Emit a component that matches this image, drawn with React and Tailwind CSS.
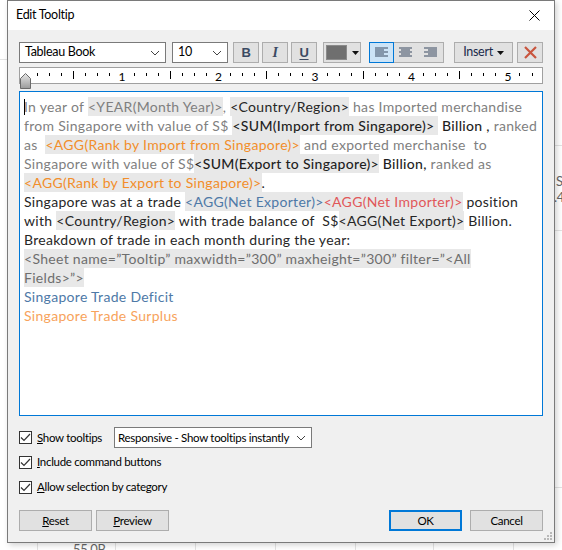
import React from 'react';

const TONE = {
  g:  'text-[#7f7f7f]',
  d:  'text-[#262626]',
  db: 'text-[#1f1f1f] font-medium',
  o:  'text-[#f28e2b]',
  lo: 'text-[#f7a35c]',
  b:  'text-[#4e79a7]',
  r:  'text-[#e15759]',
  f:  'text-[#6e6e6e]',
};

const LINES = [
  [['In year of ', 'g'], ['<YEAR(Month Year)>', 'g', 1], [', ', 'g'], ['<Country/Region>', 'd', 1], [' has Imported merchandise', 'g']],
  [['from Singapore with value of S$ ', 'g'], ['<SUM(Import from Singapore)> ', 'db', 1], [' Billion ,', 'db'], [' ranked', 'g']],
  [['as  ', 'g'], ['<AGG(Rank by Import from Singapore)>', 'o', 1], [' and exported merchanise  to', 'g']],
  [['Singapore with value of S$', 'g'], ['<SUM(Export to Singapore)>', 'db', 1], [' Billion,', 'db'], [' ranked as', 'g']],
  [['<AGG(Rank by Export to Singapore)>', 'o', 1], ['.', 'd']],
  [['Singapore was at a trade ', 'd'], ['<AGG(Net Exporter)>', 'b', 1], ['<AGG(Net Importer)>', 'r', 1], [' position', 'd']],
  [['with ', 'd'], ['<Country/Region>', 'd', 1], [' with trade balance of  S$', 'd'], ['<AGG(Net Export)>', 'd', 1], [' Billion.', 'd']],
  [['Breakdown of trade in each month during the year:', 'd']],
  [['<Sheet name=\u201dTooltip\u201d maxwidth=\u201d300\u201d maxheight=\u201d300\u201d filter=\u201d<All', 'f', 1]],
  [['Fields>\u201d>', 'f', 1]],
  [['Singapore Trade Deficit', 'b']],
  [['Singapore Trade Surplus', 'lo']],
];

function Chevron() {
  return (
    <svg width="10" height="6" viewBox="0 0 10 6">
      <path d="M1 1 L5 5 L9 1" fill="none" stroke="#444" strokeWidth="1" />
    </svg>
  );
}

function AlignIcon({ mode }) {
  const rows = [0, 1, 2, 3, 4];
  return (
    <svg width="13" height="11" viewBox="0 0 13 11">
      {rows.map(i => {
        const w = i % 2 === 0 ? 13 : 9;
        const x = mode === 'left' ? 0 : mode === 'right' ? 13 - w : (13 - w) / 2;
        return <rect key={i} x={x} y={i * 2 + 0.5} width={w} height="1" fill="#3b4a63" />;
      })}
    </svg>
  );
}

function Check() {
  return (
    <span className="w-[13px] h-[13px] bg-white border border-[#333] flex items-center justify-center">
      <svg width="11" height="9" viewBox="0 0 11 9">
        <path d="M1 4.5 L4 7.5 L10 1" fill="none" stroke="#333" strokeWidth="1.2" />
      </svg>
    </span>
  );
}

function Ruler() {
  const ticks = [];
  for (let k = 1; k < 44; k++) {
    const x = 5 + k * 12.06;
    if (k % 8 === 0) continue;
    const long = k % 8 === 4;
    ticks.push(<rect key={k} x={Math.round(x)} y={long ? 3 : 5} width="1" height={long ? 8 : 3} fill="#000" />);
  }
  return (
    <div className="relative h-[17px] w-[524px] bg-white border border-[#a0a0a0]">
      <svg className="absolute left-0 top-0" width="522" height="15">{ticks}</svg>
      {[1, 2, 3, 4, 5].map(n => (
        <span key={n} className="absolute top-[1px] text-[12px] leading-[15px] text-black"
          style={{ left: 5 + n * 96.5 - 3 }}>{n}</span>
      ))}
      <svg className="absolute left-[0px] top-[5px]" width="11" height="16" viewBox="0 0 11 16">
        <defs>
          <linearGradient id="rm" x1="0" y1="0" x2="0" y2="1">
            <stop offset="0" stopColor="#e8e8e8" />
            <stop offset="1" stopColor="#9a9a9a" />
          </linearGradient>
        </defs>
        <path d="M5.5 0.5 L10.5 5.5 L10.5 15.5 L0.5 15.5 L0.5 5.5 Z" fill="url(#rm)" stroke="#6a6a6a" />
      </svg>
    </div>
  );
}

function Btn({ children, className = '' }) {
  return (
    <div className={`h-[21px] flex items-center justify-center bg-[#e1e1e1] border border-[#adadad] ${className}`}>
      {children}
    </div>
  );
}

export default function App() {
  return (
    <div className="relative w-[562px] h-[550px] bg-white overflow-hidden font-['Lato',sans-serif] text-[11.5px] tracking-[-0.3px] text-black">
      {/* canvas behind the dialog */}
      <div className="absolute left-0 top-[59px] w-[8px] h-px bg-[#e3e3e3]" />
      <div className="absolute left-[553px] top-[145px] w-[10px] h-px bg-[#e3e3e3]" />
      <div className="absolute left-[553px] top-[230px] w-[10px] h-px bg-[#e3e3e3]" />
      <div className="absolute left-[553px] top-[487px] w-[10px] h-px bg-[#e3e3e3]" />
      <span className="absolute left-[556px] top-[173px] text-[13px] leading-[16px] text-[#666]">S</span>
      <span className="absolute left-[554px] top-[189px] text-[13px] leading-[16px] text-[#666]">.4</span>
      {[37, 115, 195, 275, 355, 433, 513].map(x => (
        <div key={x} className="absolute top-[540px] h-[10px] w-px bg-[#e3e3e3]" style={{ left: x }} />
      ))}
      <span className="absolute left-[73px] top-[541px] text-[13px] leading-[16px] text-[#666]">55.0B</span>

      {/* dialog */}
      <div className="absolute left-[7px] top-0 w-[548px] h-[543px] border border-[#7a7a7a] bg-[#f0f0f0] shadow-[2px_2px_6px_rgba(0,0,0,0.18)] flex flex-col">
        <div className="h-[29px] bg-white flex items-center pl-[8px] pr-[8px]">
          <span className="text-[12.5px]">Edit Tooltip</span>
          <svg className="ml-auto mr-[6px]" width="11" height="11" viewBox="0 0 11 11">
            <path d="M0.5 0.5 L10.5 10.5 M10.5 0.5 L0.5 10.5" stroke="#000" strokeWidth="1" />
          </svg>
        </div>

        <div className="flex-1 flex flex-col px-[11px] pt-[12px]">
          {/* toolbar */}
          <div className="flex items-center h-[21px]">
            <div className="w-[147px] h-[21px] bg-white border border-[#7a7a7a] flex items-center pl-[5px] pr-[5px]">
              <span className="text-[12.5px]">Tableau Book</span>
              <span className="ml-auto"><Chevron /></span>
            </div>
            <div className="ml-[6px] w-[56px] h-[21px] bg-white border border-[#7a7a7a] flex items-center pl-[5px] pr-[5px]">
              <span className="text-[12.5px]">10</span>
              <span className="ml-auto"><Chevron /></span>
            </div>
            <Btn className="ml-[5px] w-[26px]">
              <span className="font-['Liberation_Sans',sans-serif] font-bold text-[13px] text-[#3b4a63]">B</span>
            </Btn>
            <Btn className="ml-[3px] w-[26px]">
              <span className="font-['Liberation_Serif',serif] font-bold italic text-[14px] text-[#3b4a63]">I</span>
            </Btn>
            <Btn className="ml-[3px] w-[26px]">
              <span className="font-['Liberation_Sans',sans-serif] font-bold text-[13px] text-[#3b4a63] underline underline-offset-2">U</span>
            </Btn>
            <Btn className="ml-[6px] w-[38px] justify-start pl-[2px]">
              <span className="w-[21px] h-[15px] bg-[#6f6f6f] border border-[#8a8a8a]" />
              <svg className="ml-[5px]" width="7" height="4" viewBox="0 0 7 4">
                <path d="M0 0 L7 0 L3.5 4 Z" fill="#111" />
              </svg>
            </Btn>
            <div className="ml-[8px] flex h-[21px] border border-[#adadad] bg-[#e1e1e1]">
              <div className="w-[25px] -m-px h-[21px] border border-[#0078d7] bg-[#cce4f7] flex items-center justify-center">
                <AlignIcon mode="left" />
              </div>
              <div className="w-[25px] flex items-center justify-center"><AlignIcon mode="center" /></div>
              <div className="w-[25px] flex items-center justify-center"><AlignIcon mode="right" /></div>
            </div>
            <Btn className="ml-auto w-[59px] gap-[4px]">
              <span className="text-[12.5px] text-[#1a2a4a]">Insert</span>
              <svg width="7" height="4" viewBox="0 0 7 4">
                <path d="M0 0 L7 0 L3.5 4 Z" fill="#111" />
              </svg>
            </Btn>
            <Btn className="ml-[4px] w-[26px]">
              <svg width="13" height="13" viewBox="0 0 13 13">
                <path d="M1 1 L12 12 M12 1 L1 12" stroke="#c9553e" strokeWidth="2.2" />
              </svg>
            </Btn>
          </div>

          <div className="mt-[4px]"><Ruler /></div>

          {/* editor */}
          <div className="relative mt-[7px] h-[325px] bg-white border border-[#0078d7] pl-[4px] pt-[5px] font-['Lato',sans-serif] text-[14px] tracking-[0.3px]">
            <div className="absolute left-[4px] top-[7px] w-px h-[16px] bg-black" />
            {LINES.map((line, i) => (
              <div key={i} className="h-[19px] leading-[19px] whitespace-pre">
                {line.map(([t, tone, hl], j) => (
                  <span key={j} className={`inline-block align-top h-[19px] ${TONE[tone]} ${hl ? 'bg-[#e8e8e8]' : ''}`}>{t}</span>
                ))}
              </div>
            ))}
          </div>

          {/* options */}
          <div className="mt-[11px] h-[21px] flex items-center">
            <Check />
            <span className="ml-[5px]"><span className="underline">S</span>how tooltips</span>
            <div className="ml-[12px] w-[198px] h-[21px] bg-white border border-[#7a7a7a] flex items-center pl-[3px] pr-[5px] whitespace-nowrap">
              <span>Responsive - Show tooltips instantly</span>
              <span className="ml-auto"><Chevron /></span>
            </div>
          </div>
          <div className="mt-[4px] h-[20px] flex items-center">
            <Check />
            <span className="ml-[5px]"><span className="underline">I</span>nclude command buttons</span>
          </div>
          <div className="mt-[5px] h-[20px] flex items-center">
            <Check />
            <span className="ml-[5px]"><span className="underline">A</span>llow selection by category</span>
          </div>

          <div className="mt-[13px] flex items-center">
            <Btn className="w-[73px]"><span><span className="underline">R</span>eset</span></Btn>
            <Btn className="ml-[4px] w-[73px]"><span><span className="underline">P</span>review</span></Btn>
            <div className="ml-auto w-[73px] h-[21px] flex items-center justify-center bg-[#e1e1e1] border-2 border-[#0078d7]">OK</div>
            <Btn className="ml-[8px] w-[73px]">Cancel</Btn>
          </div>
        </div>

        <svg className="absolute right-[2px] bottom-[2px]" width="9" height="9" viewBox="0 0 9 9">
          {[[7, 1], [4, 4], [7, 4], [1, 7], [4, 7], [7, 7]].map(([x, y], i) => (
            <rect key={i} x={x} y={y} width="2" height="2" fill="#b8b8b8" />
          ))}
        </svg>
      </div>
    </div>
  );
}
